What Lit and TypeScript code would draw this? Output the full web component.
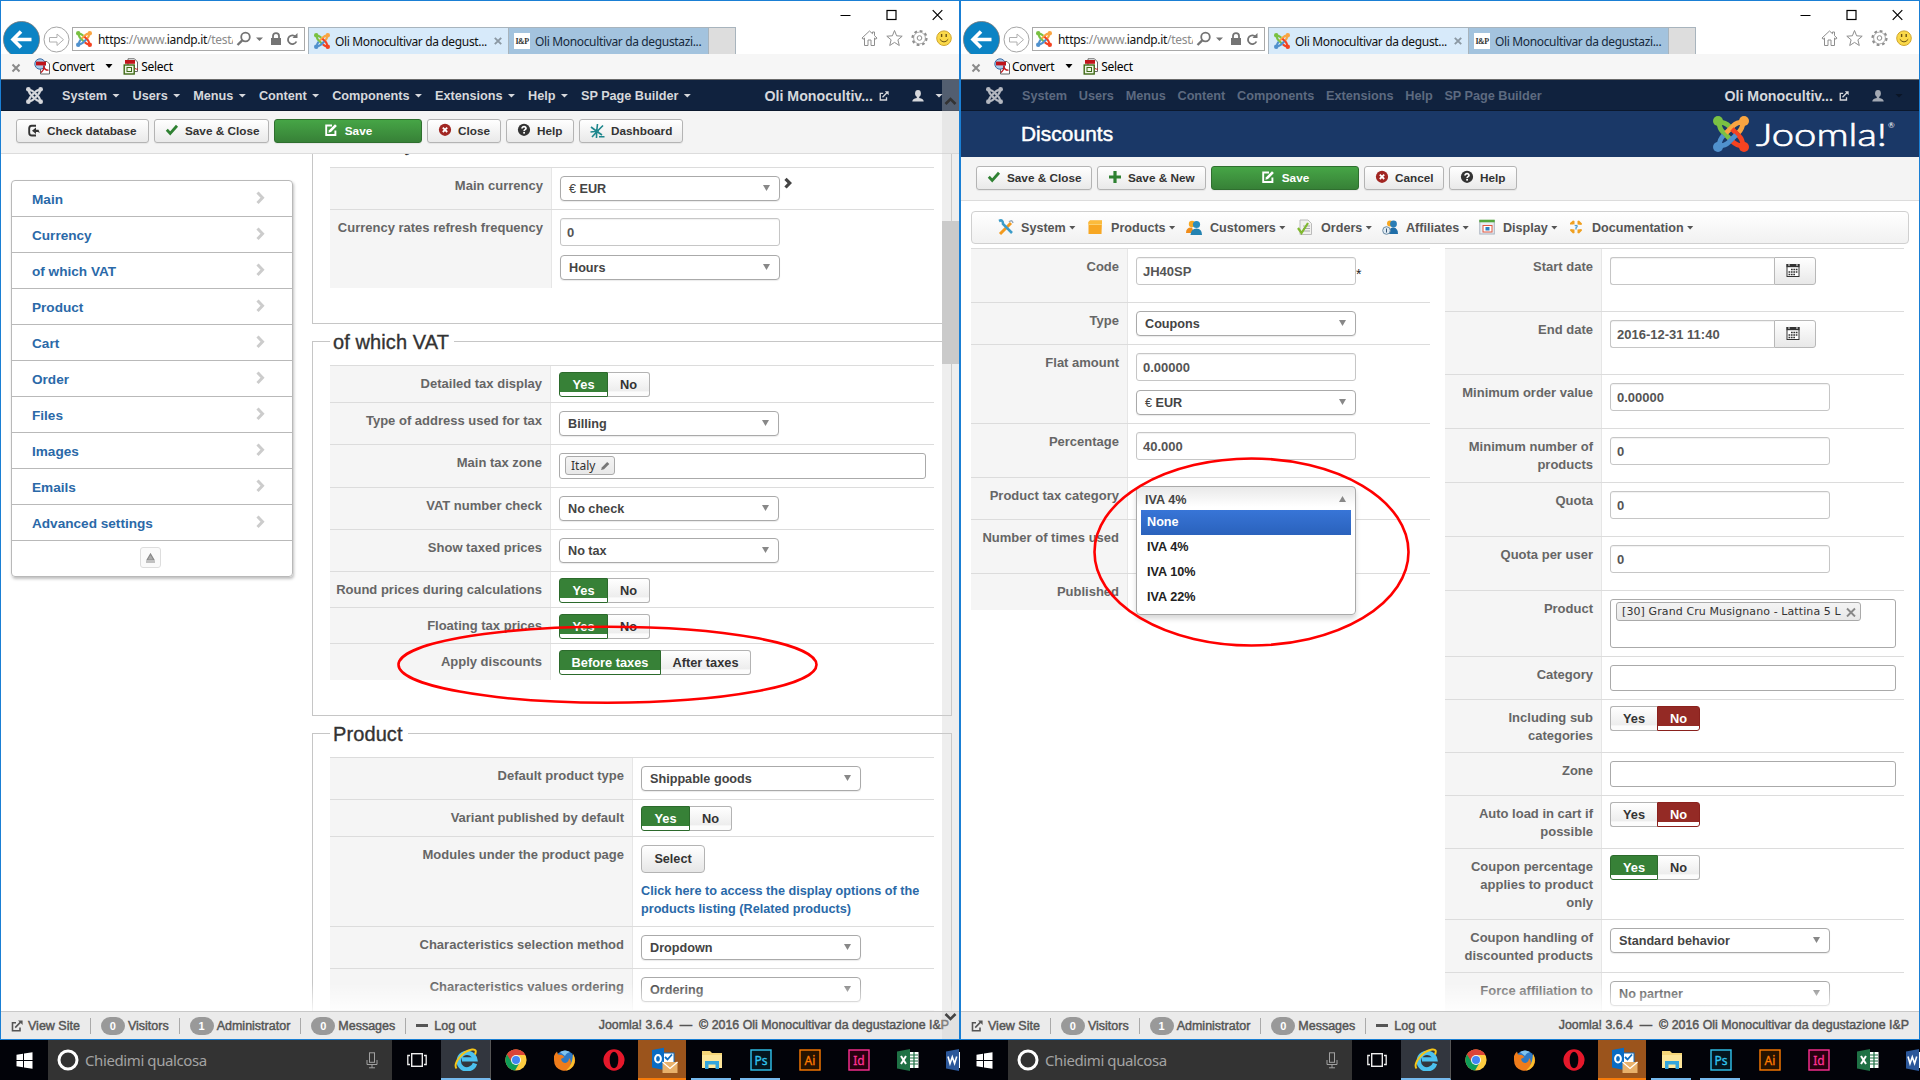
import { LitElement, html, css, svg, nothing, TemplateResult } from "lit";
import { customElement, property } from "lit/decorators.js";

const base = css`
  * { box-sizing: border-box; }
  :host { display: block; font-family: "Liberation Sans", Arial, sans-serif; }
  svg { display: block; flex: none; }
  .seg { font-family: "Noto Sans", "Open Sans", sans-serif; }
`;

const joomlaArm = (color: string, turn: number) => svg`
  <g transform="rotate(${turn} 18 18)" stroke=${color} fill="none" stroke-width="4.8">
    <circle cx="5" cy="5" r="5" fill=${color} stroke="none"/>
    <path d="M6 6C6.300 11.500 7.500 13.500 9.500 15.500L17 23M6 6C11.500 6.300 13.500 7.500 16.500 10.500"/>
  </g>`;

const joomlaMark = (size: number, mono = "") => html`
  <svg width=${size} height=${size} viewBox="0 0 36 36">
    ${joomlaArm(mono || "#7ac143", 0)}${joomlaArm(mono || "#f9a541", 90)}
    ${joomlaArm(mono || "#f44321", 180)}${joomlaArm(mono || "#5091cd", 270)}
  </svg>`;

const external = (size: number) => html`
  <svg width=${size} height=${size} viewBox="0 0 12 12" fill="none" stroke="currentColor" stroke-width="1.6">
    <path d="M5 2.8H1.5V10.8H9V7.5M4.2 7.6L9.8 1.9"/><path d="M7 .4H11.6V5L10.2 3.6 8.6 2z" fill="currentColor" stroke="none"/>
  </svg>`;

const icons: Record<string, TemplateResult> = {
  check: html`<svg width="14" height="14" viewBox="0 0 14 14"><path d="M1.800 6.800L5.200 10.400 12 2.800" fill="none" stroke="#2f8132" stroke-width="2.800"/></svg>`,
  plus: html`<svg width="14" height="14" viewBox="0 0 14 14"><path d="M7 1V13M1 7H13" stroke="#2f8132" stroke-width="3.200"/></svg>`,
  edit: html`<svg width="14" height="14" viewBox="0 0 14 14"><path d="M8 2.500H2.200V12H11.400V7.500" fill="none" stroke="#fff" stroke-width="1.900"/><path d="M4.400 9.800l.6-2.600L11 1.200l1.900 1.900-5.900 6z" fill="#fff"/></svg>`,
  cancel: html`<svg width="14" height="14" viewBox="0 0 14 14"><circle cx="7" cy="6.800" r="6.100" fill="#a12622"/><path d="M4.800 4.600l4.400 4.400M9.200 4.600L4.800 9" stroke="#fff" stroke-width="1.800"/></svg>`,
  help: html`<svg width="14" height="14" viewBox="0 0 14 14"><circle cx="7" cy="6.800" r="6.100" fill="#333"/><path d="M5 5.600C5 2.800 9.200 3 9 5.400 8.900 6.800 7.200 6.500 7.100 8" fill="none" stroke="#fff" stroke-width="1.700"/><rect x="6.200" y="8.900" width="1.800" height="1.700" fill="#fff"/></svg>`,
  redo: html`<svg width="14" height="14" viewBox="0 0 14 14"><path d="M9 2.800H4.600Q2.200 3 2.200 5.500V9.700Q2.200 12.500 5 12.500H9" fill="none" stroke="#333" stroke-width="1.900"/><path d="M5 7.700L9 4.500V6.700H11.500L12.800 10.100 11 8.900H9V10.900z" fill="#333"/></svg>`,
  dash: html`<svg width="15" height="15" viewBox="0 0 15 15"><path d="M7.500 1Q6.500 7.500 6.500 15M1 4L7 8.500 12 12M13 2.500L7 8.500 2 14M.5 9L9 8M9 13.800H14.500" stroke="#1d868c" stroke-width="1.600" fill="none"/></svg>`,
};

@customElement("browser-chrome")
class BrowserChrome extends LitElement {
  static styles = [base, css`
    :host { height: 79px; background: #fff; color: #111; }
    .top { height: 53px; display: flex; position: relative; padding-left: 2px; overflow: hidden; }
    .nav { margin-top: 19px; display: flex; align-items: flex-start; }
    .addr { width: 233px; height: 24px; margin: 26px 0 0 0; border: 1px solid #a9a9a9; display: flex; align-items: center; padding-left: 3px; font-size: 12px; }
    .url { width: 137px; margin-left: 6px; overflow: hidden; white-space: nowrap; letter-spacing: -.3px; }
    .url i { font-style: normal; color: #8a8a8a; }
    .addr .mag { margin-left: 3px; }
    .tab { margin-top: 26px; height: 27px; display: flex; align-items: center; font-size: 12px; border: 1px solid #a8b4bd; border-bottom: 0; white-space: nowrap; letter-spacing: -.35px; }
    .t1 { width: 201px; margin-left: 3px; background: #d7eafa; padding-left: 5px; }
    .t1 span { margin: 0 0 0 5px; width: 155px; }
    .t2 { width: 200px; background: #a3c3de; border-left: 0; padding-left: 5px; color: #15293c; }
    .t2 span { margin: 0 0 0 5px; }
    .t3 { width: 27px; background: #ddd; border-left: 0; }
    .fav { width: 16px; height: 16px; background: #fff; font: bold 8px "Liberation Serif", serif; letter-spacing: -.6px; color: #333; display: grid; place-items: center; }
    .x { margin-left: 4px; }
    .ctl { position: absolute; right: 16px; top: 8px; display: flex; gap: 35px; }
    .tools { position: absolute; right: 7px; top: 28px; display: flex; gap: 8px; }
    .bar { height: 25px; background: #f6f6f6; display: flex; align-items: center; font-size: 12px; padding-left: 10px; color: #000; letter-spacing: -.3px; }
    .bar .cx { margin-top: 2px; }
    .bar span { margin: -1px 0 0 1px; }
    .pdf { margin-left: 13px; }
    .dn { margin-left: 11px; }
    .sel { margin-left: 10px; }
    .line { height: 1px; background: #6b6b6b; }
  `];
  render() {
    return html`
      <div class="top seg">
        <svg class="nav" width="69" height="38" viewBox="0 0 69 38">
          <circle cx="18.5" cy="19.5" r="18" fill="#0b83c4" stroke="#777" stroke-width=".8"/>
          <path d="M28.500 19.500H10M18 11.500L10 19.500L18 27.500" fill="none" stroke="#fff" stroke-width="3.600"/>
          <circle cx="53.500" cy="19.500" r="12.500" fill="#fff" stroke="#a5a5a5"/>
          <path d="M46.500 17.500H54V14L60.500 19.700 54 25.500V22H46.500z" fill="#fff" stroke="#b0b0b0"/>
        </svg>
        <div class="addr">
          ${joomlaMark(16)}
          <span class="url">https<i>://www.</i>iandp.it<i>/test/</i></span>
          <svg class="mag" width="68" height="18" viewBox="0 0 68 18" fill="none" stroke="#747474" stroke-width="1.800">
            <circle cx="9.500" cy="7" r="4.300"/><path d="M6.500 10.200L1.500 15" stroke-width="2.400"/>
            <path d="M20 7.500H27L23.500 11z" fill="#747474" stroke="none"/>
            <rect x="35" y="8" width="10" height="7" fill="#747474" stroke="none"/><path d="M37 8V6Q37 3.200 40 3.200 43 3.200 43 6V8"/>
            <path d="M60 7.200A4.400 4.400 0 1 0 60.400 11.500"/><path d="M61.500 3V8H56.500z" fill="#747474" stroke="none"/>
          </svg>
        </div>
        <div class="tab t1">${joomlaMark(16)}<span>Oli Monocultivar da degust...</span>
          <svg class="x" width="8" height="8" viewBox="0 0 8 8"><path d="M.8.8L7.200 7.200M7.200.8L.8 7.200" stroke="#8b98a3" stroke-width="1.900"/></svg></div>
        <div class="tab t2"><b class="fav">I&amp;P</b><span>Oli Monocultivar da degustazi...</span></div>
        <div class="tab t3"></div>
        <div class="ctl">
          <svg width="11" height="12" viewBox="0 0 11 12"><path d="M.5 6.500H10.500" stroke="#000"/></svg>
          <svg width="11" height="12" viewBox="0 0 11 12"><rect x="1" y="1.500" width="9" height="9" fill="none" stroke="#000" stroke-width="1.200"/></svg>
          <svg width="11" height="12" viewBox="0 0 11 12"><path d="M.7 1.200L10.300 10.800M10.300 1.200L.7 10.800" stroke="#000" stroke-width="1.200"/></svg>
        </div>
        <div class="tools">
          <svg width="17" height="18" viewBox="0 0 17 18"><path d="M1 9L8.500 2 11.500 4.700V3H13.500V6.700L16 9 15 10.300 13.500 9V16.500H10V11H7V16.500H3.500V9L2 10.300z" fill="#fff" stroke="#8e8e8e"/></svg>
          <svg width="17" height="18" viewBox="0 0 17 18"><path d="M8.500 1.500L10.600 6.800 16.200 7.200 11.900 10.800 13.300 16.500 8.500 13.400 3.700 16.500 5.100 10.800.8 7.200 6.400 6.800z" fill="#fff" stroke="#8e8e8e"/></svg>
          <svg width="17" height="18" viewBox="0 0 17 18"><circle cx="8.500" cy="9" r="6.800" fill="none" stroke="#8e8e8e" stroke-width="2.600" stroke-dasharray="2.700 2.640"/><circle cx="8.500" cy="9" r="5.900" fill="#fff" stroke="#9a9a9a" stroke-width=".8"/><circle cx="8.500" cy="9" r="2.300" fill="none" stroke="#8e8e8e"/></svg>
          <svg width="16" height="18" viewBox="0 0 16 18"><circle cx="8" cy="9.200" r="7.300" fill="#fbd949" stroke="#d0a52c"/><path d="M5.600 5V8M10.200 5V8" stroke="#6b5212" stroke-width="1.400"/><path d="M3.800 10.300Q8 15.500 12.200 10.300" fill="none" stroke="#6b5212"/></svg>
        </div>
      </div>
      <div class="bar seg">
        <svg class="cx" width="10" height="10" viewBox="0 0 10 10"><path d="M1.500 1.500L8.500 8.500M8.500 1.500L1.500 8.500" stroke="#8a8a8a" stroke-width="2"/></svg>
        <svg class="pdf" width="17" height="17" viewBox="0 0 17 17"><path d="M6.500 3.500H13L15.500 6V16H6.500z" fill="#fff" stroke="#666"/><circle cx="6" cy="6" r="5.200" fill="#a9cdec" stroke="#3d6da6"/><rect x="2" y="3.600" width="10" height="3.800" fill="#c0141b"/><path d="M7 14.500Q11 11 9.500 7.500Q10.500 12.500 14.500 12.200" fill="none" stroke="#c0141b" stroke-width="1.300"/></svg>
        <span>Convert</span>
        <svg class="dn" width="8" height="5" viewBox="0 0 8 5"><path d="M.5 0H7.500L4 4.300z"/></svg>
        <svg class="sel" width="17" height="17" viewBox="0 0 17 17"><path d="M5 .8H11.500L14.500 4V13.500H5z" fill="#fff" stroke="#666"/><rect x="2" y="2" width="10" height="3.800" fill="#c0141b"/><path d="M11 7Q11 12 15 11" fill="none" stroke="#c0141b"/><rect x="1.200" y="7" width="10" height="9" fill="#eef5e8" stroke="#3f6a14" stroke-width="1.400"/><rect x="4" y="9.500" width="4.500" height="4" fill="none" stroke="#3f6a14"/></svg>
        <span>Select</span>
      </div>
      <div class="line"></div>`;
  }
}

@customElement("admin-nav")
class AdminNav extends LitElement {
  @property({ type: Boolean }) dim = false;
  static styles = [base, css`
    :host { height: 31px; background: #10223e; border-bottom: 1px solid #0b182d; color: #d6d8dc; font-size: 12.700px; font-weight: bold; }
    .row { display: flex; height: 30px; align-items: center; padding: 1px 0 0 25px; }
    nav { display: flex; margin-left: 19px; gap: 12.600px; flex: 1; letter-spacing: -.03px; }
    nav span { display: flex; align-items: center; gap: 5px; white-space: nowrap; }
    nav.dim { color: #5d6a80; gap: 11.800px; }
    .site { display: flex; align-items: center; gap: 6px; font-size: 14.200px; }
    .user { display: flex; align-items: center; gap: 11px; margin: 0 16px 0 23px; }
    .user.dim { color: #a3a9b3; }
    .user.dim .caret { color: #0a1526; }
    .caret { width: 8px; height: 4px; background: currentColor; clip-path: polygon(0 0, 100% 0, 50% 100%); }
  `];
  render() {
    const items = ["System", "Users", "Menus", "Content", "Components", "Extensions", "Help", "SP Page Builder"];
    return html`<div class="row">
      ${joomlaMark(17, this.dim ? "#b4b8c0" : "#d6d8dc")}
      <nav class=${this.dim ? "dim" : ""}>${items.map((i) => html`<span>${i}${this.dim ? nothing : html`<i class="caret"></i>`}</span>`)}</nav>
      <div class="site">Oli Monocultiv... ${external(10)}</div>
      <div class="user ${this.dim ? "dim" : ""}">
        <svg width="12" height="12" viewBox="0 0 12 12"><ellipse cx="6" cy="3.400" rx="2.900" ry="3.400" fill="currentColor"/><path d="M4.800 6H7.200V8Q11.700 8.800 11.700 11.500H.3Q.3 8.800 4.800 8z" fill="currentColor"/></svg>
        <i class="caret"></i>
      </div></div>`;
  }
}

interface Btn { icon: string; text: string; w: number; green?: boolean }

@customElement("tool-buttons")
class ToolButtons extends LitElement {
  @property({ attribute: false }) items: Btn[] = [];
  static styles = [base, css`
    :host { height: 43px; background: #f4f4f4; border-bottom: 1px solid #dcdcdc; padding: 8px 0 0 15px; }
    :host(.tall) { height: 44px; padding-top: 9px; }
    .row { display: flex; gap: 5px; }
    .b { height: 24px; border: 1px solid #b4b4b4; border-radius: 3px; background: linear-gradient(#fff, #e9e9e9); display: flex; align-items: center; gap: 6px; padding: 0 0 2px 10px; font-size: 11.750px; font-weight: bold; color: #333; white-space: nowrap; box-shadow: 0 1px 1px rgba(0, 0, 0, .06); }
    .b.green { background: linear-gradient(#46a546, #378137); border-color: #2f6f2f; color: #fff; justify-content: center; padding-left: 0; gap: 7px; }
  `];
  render() {
    return html`<div class="row">${this.items.map((b) => html`<div class="b ${b.green ? "green" : ""}" style="width:${b.w}px">${icons[b.icon]}${b.text}</div>`)}</div>`;
  }
}

type Field =
  | { k: "select"; v: string } | { k: "input"; v: string } | { k: "both"; a: string; b: string }
  | { k: "toggle"; a: string; b: string; on: 0 | 1; wa: number; wb: number }
  | { k: "tag"; v: string; h: number; w: number; mark: "pen" | "x" | "" }
  | { k: "date"; v: string } | { k: "modules" } | { k: "dropdown" } | { k: "none" };
interface Row { label: string; h: number; f: Field; after?: string }

const yn = (on: 0 | 1, wa = 49, wb = 42): Field => ({ k: "toggle", a: "Yes", b: "No", on, wa, wb });

@customElement("field-table")
class FieldTable extends LitElement {
  @property({ attribute: false }) rows: Row[] = [];
  @property({ type: Number }) label = 221;
  @property({ type: Number }) pad = 8;
  static styles = [base, css`
    :host { font-size: 12.650px; font-weight: bold; color: #444; }
    .r { display: grid; border-top: 1px solid #dcdcdc; }
    .r:last-child { background: linear-gradient(to right, #e4e4e4, #e4e4e4) no-repeat bottom left / var(--lw) 1px; }
    .l { background: #f5f5f5; border-right: 1px solid #e6e6e6; padding: 9px 8px 0 0; text-align: right; line-height: 18px; color: #666; font-size: 13px; }
    .v { padding-top: 8px; position: relative; }
    .v.t { padding-top: 6px; }
    .line { display: flex; }
    .s, .i, .box { border: 1px solid #aaa; border-radius: 4px; background: #fff; display: flex; align-items: center; }
    .s { width: 220px; height: 25px; padding: 0 9px 0 8px; justify-content: space-between; box-shadow: 0 1px 1px rgba(0, 0, 0, .08); }
    .s::after { content: ""; width: 7px; height: 6px; background: #888; clip-path: polygon(0 0, 100% 0, 50% 100%); margin-bottom: 1px; }
    .s.up::after { clip-path: polygon(50% 0, 100% 100%, 0 100%); }
    .i { width: 220px; height: 28px; border-color: #c6c6c6; border-radius: 3px; padding-left: 6px; font-size: 13px; color: #555; box-shadow: inset 0 1px 1px rgba(0, 0, 0, .06); }
    .i + .s { margin-top: 9px; }
    .s em { font-style: normal; font-weight: normal; }
    .star { font-size: 14px; font-weight: normal; margin-top: 9px; color: #222; }
    .chev { margin: 1px 0 0 4px; }
    .tg { display: flex; height: 25px; font-size: 12.800px; }
    .tg span { border: 1px solid #b3b3b3; border-radius: 3px; background: linear-gradient(#fff, #ededed 78%, #fcfcfc 82%); display: grid; place-items: center; color: #333; }
    .tg span:first-child { border-radius: 3px 0 0 3px; border-right: 0; }
    .tg span:last-child { border-radius: 0 3px 3px 0; }
    .tg .yes, .tg .no { color: #fff; background: linear-gradient(#378137 0 19px, #fff 19px); border-color: #2c6a2c; }
    .tg span.yes { border-right: 1px solid #2c6a2c; }
    .tg .yes + span { border-left: 0; }
    .tg .no { background: linear-gradient(#942a25 0 19px, #fff 19px); border-color: #8a211d; }
    .box { align-items: flex-start; border-radius: 3px; }
    .chip { display: flex; align-items: center; border: 1px solid #aaa; border-radius: 3px; background: linear-gradient(#f4f4f4, #e8e8e8); height: 19px; margin: 2px 0 0 5px; padding: 0 4px 0 5px; gap: 5px; font-family: "DejaVu Sans", Verdana, sans-serif; font-weight: normal; font-size: 11px; letter-spacing: .1px; color: #333; white-space: nowrap; }
    .chip.pen { font-family: "Noto Sans", "DejaVu Sans", sans-serif; font-size: 12px; letter-spacing: 0; }
    .date .i { width: 164px; border-radius: 3px 0 0 3px; border-right: 0; }
    .cal { width: 42px; height: 28px; border: 1px solid #b8b8b8; border-radius: 0 3px 3px 0; background: linear-gradient(#fff, #e8e8e8); display: grid; place-items: center; padding: 0 4px 3px 0; }
    .btn { width: 64px; height: 28px; border: 1px solid #b3b3b3; border-radius: 4px; background: linear-gradient(#fff, #e6e6e6); display: grid; place-items: center; color: #333; }
    .link { margin-top: 9px; line-height: 18px; color: #2a69a8; font-size: 12.650px; white-space: nowrap; }
    .drop { position: absolute; left: 8px; top: 8px; width: 220px; height: 129px; border: 1px solid #aaa; border-radius: 4px; background: linear-gradient(#e9e9e9, #fff 20px); box-shadow: 0 4px 5px rgba(0, 0, 0, .15); z-index: 3; }
    .drop .s { border: 0; width: 218px; height: 23px; padding-top: 2px; background: none; box-shadow: none; }
    .drop .o { height: 25px; line-height: 25px; margin: 0 4px; padding-left: 6px; color: #222; }
    .drop .o.on { color: #fff; background: linear-gradient(#3875d7, #2a62bc); }
  `];
  text(v: string) {
    return v.startsWith("€") ? html`<span><em>€</em>${v.slice(1)}</span>` : html`<span>${v}</span>`;
  }
  field(f: Field, after?: string) {
    switch (f.k) {
      case "select": return html`<div class="line"><div class="s">${this.text(f.v)}</div>${after === "chev" ? html`<svg class="chev" width="8" height="13" viewBox="0 0 8 13"><path d="M1.500 1.800L5.800 6 1.500 10.500" fill="none" stroke="#444" stroke-width="3.200"/></svg>` : nothing}</div>`;
      case "input": return html`<div class="line"><div class="i">${f.v}</div>${after === "*" ? html`<span class="star">*</span>` : nothing}</div>`;
      case "both": return html`<div class="i">${f.a}</div><div class="s">${this.text(f.b)}</div>`;
      case "toggle": return html`<div class="tg"><span class=${f.on === 0 ? "yes" : ""} style="width:${f.wa}px">${f.a}</span><span class=${f.on === 1 ? "no" : ""} style="width:${f.wb}px">${f.b}</span></div>`;
      case "tag": return html`<div class="box" style="width:${f.w}px;height:${f.h}px">${f.v ? html`<span class="chip ${f.mark}">${f.v}${f.mark === "pen"
        ? html`<svg width="10" height="10" viewBox="0 0 10 10"><path d="M1 9L2 6.200 7.200 1 9.300 3 4 8.200z" fill="#777"/></svg>`
        : html`<svg width="10" height="10" viewBox="0 0 10 10"><path d="M1 1.500L9 9.500M9 1.500L1 9.500" stroke="#888" stroke-width="1.900"/></svg>`}</span>` : nothing}</div>`;
      case "date": return html`<div class="line date"><div class="i">${f.v}</div><div class="cal"><svg width="14" height="14" viewBox="0 0 14 14"><rect x="1" y="1.500" width="12" height="12" fill="#fff" stroke="#333"/><path d="M.5 1H13.500V4.200H.5z" fill="#333"/><path d="M3 0V3M11 0V3" stroke="#eee"/><path d="M5 6.500H12M2.500 9H12M2.500 11.500H9" stroke="#333" stroke-width="1.600" stroke-dasharray="1.700 .7"/></svg></div></div>`;
      case "modules": return html`<div class="btn">Select</div><div class="link">Click here to access the display options of the<br>products listing (Related products)</div>`;
      case "dropdown": return html`<div class="drop"><div class="s up">IVA 4%</div><div class="o on">None</div><div class="o">IVA 4%</div><div class="o">IVA 10%</div><div class="o">IVA 22%</div></div>`;
      default: return nothing;
    }
  }
  render() {
    return this.rows.map((r) => html`
      <div class="r" style="height:${r.h}px;grid-template-columns:${this.label}px 1fr;--lw:${this.label}px">
        <div class="l">${r.label.split("|").map((s, n) => html`${n ? html`<br>` : nothing}${s}`)}</div>
        <div class="v ${r.f.k === "toggle" ? "t" : ""}" style="padding-left:${this.pad}px">${this.field(r.f, r.after)}</div>
      </div>`);
  }
}

@customElement("status-bar")
class StatusBar extends LitElement {
  static styles = [base, css`
    :host { height: 28px; background: #ebebeb; border-top: 1px solid #c8c8c8; color: #555; font-size: 12.500px; -webkit-text-stroke: .45px currentColor; position: relative; }
    .fade { position: absolute; left: 0; right: 0; top: -29px; height: 28px; background: linear-gradient(rgba(255, 255, 255, 0), rgba(255, 255, 255, .85)); }
    .row { height: 27px; display: flex; align-items: center; padding: 0 10px 0 10px; white-space: nowrap; }
    .g { display: flex; align-items: center; height: 16px; padding-right: 10px; margin-right: 10px; border-right: 1px solid #aaa; }
    .g.last { border: 0; }
    .g svg { margin-right: 5px; }
    .n { width: 24px; height: 18px; border-radius: 9px; background: #999; color: #fff; font-weight: bold; font-size: 11px; display: grid; place-items: center; margin-right: 3px; -webkit-text-stroke: 0; }
    .dash { width: 12px; height: 3px; background: #555; margin-right: 6px; }
    .c { margin-left: auto; margin-top: -2px; white-space: pre; font-size: 12.380px; }
  `];
  render() {
    const groups: [string, string][] = [["0", "Visitors"], ["1", "Administrator"], ["0", "Messages"]];
    return html`<div class="fade"></div><div class="row">
      <div class="g">${external(12)}View Site</div>
      ${groups.map(([n, t]) => html`<div class="g"><span class="n">${n}</span>${t}</div>`)}
      <div class="g last"><i class="dash"></i>Log out</div>
      <div class="c">Joomla! 3.6.4  —  © 2016 Oli Monocultivar da degustazione I&amp;P</div>
    </div>`;
  }
}

const adobe = (t: string, c: string, bg: string) => html`<svg width="22" height="22" viewBox="0 0 22 22"><rect x="1" y="1" width="20" height="20" fill=${bg} stroke=${c} stroke-width="1.400"/><text x="11" y="15.500" text-anchor="middle" font-family="Noto Sans, sans-serif" font-size="12" fill=${c} stroke=${c} stroke-width=".3">${t}</text></svg>`;

@customElement("task-bar")
class TaskBar extends LitElement {
  static styles = [base, css`
    :host { height: 40px; background: #020309; overflow: hidden; }
    .row { display: flex; height: 40px; width: 1000px; }
    .c { width: 49px; display: grid; place-items: center; flex: none; }
    .start { width: 48px; }
    .search { width: 344px; background: #333; display: flex; align-items: center; padding: 0 14px 0 9px; color: #a3a3a3; font-size: 15px; letter-spacing: -.4px; }
    .search span { flex: 1; margin-left: 6px; }
    .view { width: 49px; }
    .ie { width: 50px; background: #32363e; border-bottom: 2px solid #76b9ed; border-right: 1px solid #555; }
    .mail { width: 48px; margin: 0 1px 0 0; padding: 2px 0 0 4px; background: #9b541c; border-bottom: 2px solid #f77b0a; }
    .open { background: linear-gradient(#76b9ed, #76b9ed) no-repeat 4px 38px / 40px 2px; }
  `];
  render() {
    return html`<div class="row seg">
      <div class="c start"><svg width="17" height="17" viewBox="0 0 17 17"><path d="M.5 2.700L7 1.800V8H.5zM8 1.600L16.500.3V8H8zM.5 9H7V15.200L.5 14.300zM8 9H16.500V16.700L8 15.400z" fill="#fff"/></svg></div>
      <div class="search">
        <svg width="22" height="22" viewBox="0 0 22 22"><circle cx="11" cy="11" r="9" fill="none" stroke="#fff" stroke-width="3"/></svg>
        <span>Chiedimi qualcosa</span>
        <svg width="12" height="17" viewBox="0 0 12 17" fill="none" stroke="#a0a0a0"><rect x="3.500" y=".8" width="5" height="9.500"/><path d="M1 8V12.500H11V8M6 12.500V15.800M3 15.800H9"/></svg>
      </div>
      <div class="c view"><svg width="20" height="14" viewBox="0 0 20 14" fill="none" stroke="#eee"><rect x="4.700" y=".7" width="10.600" height="12.600" stroke-width="1.400"/><path d="M3 2.500H.8V11.500H3M17 2.500H19.200V11.500H17" stroke-width="1.300"/></svg></div>
      <div class="c ie"><svg width="24" height="24" viewBox="0 0 24 24"><path d="M21 16.500A8.300 8.300 0 1 1 21.200 12.400H8" fill="none" stroke="#4cc1ee" stroke-width="4.400"/><path d="M2.500 21.500C-1 17 8 4 18 2.500C22 2 22.500 4 21 7.500" fill="none" stroke="#f5c518" stroke-width="2"/></svg></div>
      <div class="c"><svg width="22" height="22" viewBox="0 0 22 22"><circle cx="11" cy="11" r="10.600" fill="#ffcd40"/><path d="M11 11L2 5.500A10.600 10.600 0 0 1 20.300 6H11z" fill="#db4437"/><path d="M11 11L1.900 5.600A10.600 10.600 0 0 0 10 21.600L15 13z" fill="#0f9d58"/><path d="M2 5.500A10.600 10.600 0 0 1 20.300 6H11A5 5 0 0 0 6.300 12.500z" fill="#db4437"/><circle cx="11" cy="11" r="5" fill="#f4f4f4"/><circle cx="11" cy="11" r="4" fill="#4285f4"/></svg></div>
      <div class="c"><svg width="23" height="23" viewBox="0 0 23 23"><circle cx="12" cy="11" r="9.500" fill="#2c78c4"/><path d="M7 3Q12 0 17 3Q13 4 12 7z" fill="#7fc4ee"/><path d="M1 7Q2 4 4 2.500L5 5.500 9 6 11.500 8 8 10Q9 14 12.500 14Q16 13 16 9Q19 12 17 15.500Q20 13 20 5Q24 11 20.500 17Q16 23 9 21.500Q1 19 1 11z" fill="#ef7c1b"/><path d="M20 5Q23.500 11 20 17Q17 21 13 21.500Q20 16 20 5z" fill="#f9c22e"/></svg></div>
      <div class="c"><svg width="22" height="22" viewBox="0 0 22 22"><path fill-rule="evenodd" d="M11 .3A10.600 10.700 0 1 0 11 21.700 10.600 10.700 0 1 0 11 .3zM11 2.800Q15.300 3.500 15.300 11T11 19.200Q6.700 18.500 6.700 11T11 2.800z" fill="#e5182b"/></svg></div>
      <div class="c mail"><svg width="27" height="26" viewBox="0 0 27 26"><rect x="11" y="6" width="12" height="12" fill="#fff" stroke="#0a6cc4"/><path d="M14 10L16.500 12.500 21 7.500" fill="none" stroke="#0a6cc4" stroke-width="1.800"/><path d="M1 3L13 .8V23L1 20.500z" fill="#0a6cc4"/><ellipse cx="7" cy="11.800" rx="2.900" ry="3.700" fill="none" stroke="#fff" stroke-width="2"/><rect x="11.500" y="15" width="15" height="11" fill="#e8b06a"/><path d="M11.500 15L19 21.500 26.500 15" fill="none" stroke="#fff" stroke-width="1.300"/></svg></div>
      <div class="c open"><svg width="22" height="20" viewBox="0 0 22 20"><path d="M1 1H9L11 3H21V18H1z" fill="#f5d679"/><path d="M1 5H21V18H1z" fill="#fde69a"/><path d="M4 19V11H18V19H14.500V14.500H7.500V19z" fill="#34a5dc"/></svg></div>
      <div class="c open">${adobe("Ps", "#31c5f0", "#04161f")}</div>
      <div class="c">${adobe("Ai", "#ff7c00", "#261300")}</div>
      <div class="c">${adobe("Id", "#ff3093", "#27000f")}</div>
      <div class="c"><svg width="22" height="22" viewBox="0 0 22 22"><rect x="11" y="3" width="10.500" height="16" fill="#fff"/><path d="M11 6H21M11 9H21M11 12H21M11 15H21M17 3V19" stroke="#1e7145" stroke-width="1.200"/><path d="M0 2.500L13 0V22L0 19.500z" fill="#1e7145"/><path d="M4 7L9 15M9 7L4 15" stroke="#fff" stroke-width="2"/></svg></div>
      <div class="c"><svg width="22" height="22" viewBox="0 0 22 22"><rect x="11" y="3" width="10.500" height="16" fill="#fff"/><path d="M0 2.500L13 0V22L0 19.500z" fill="#2b579a"/><path d="M2 7.500L4 14.500 6.300 8 8.600 14.500 10.700 7.500" stroke="#fff" stroke-width="1.600" fill="none"/></svg></div>
    </div>`;
  }
}

@customElement("app-root")
class AppRoot extends LitElement {
  static styles = [base, css`
    :host { width: 1920px; height: 1080px; overflow: hidden; background: #fff; position: relative; }
    .desk { display: grid; grid-template-columns: 960px 960px; }
    .side { display: flex; flex-direction: column; width: 960px; height: 1080px; }
    .win { height: 1040px; border: 1px solid #1a7fd4; display: flex; flex-direction: column; position: relative; background: #fff; }
    .body { flex: 1; min-height: 0; overflow: hidden; }
    .left { display: grid; grid-template-columns: 311px 640px; }
    .menu { margin: 26px 0 0 10px; width: 282px; height: 397px; border: 1px solid #b9b9b9; border-radius: 4px; box-shadow: 1px 2px 3px rgba(0, 0, 0, .25); }
    .mi { height: 36px; border-bottom: 1px solid #b9b9b9; display: flex; justify-content: space-between; padding: 9px 27px 0 20px; line-height: 19px; font-size: 13.600px; font-weight: bold; color: #2a69a8; }
    .mi svg { margin-top: 1px; }
    .fold { width: 21px; height: 21px; margin: 6px auto 0; border: 1px solid #ddd; border-radius: 3px; display: grid; place-items: center; background: #fafafa; position: relative; left: -2px; }
    fieldset { margin: -7px 0 0; padding: 0 17px 0 17px; border: 1px solid #c6c6c6; width: 640px; min-width: 0; }
    .f1 { height: 205px; margin-top: -35px; }
    .f2 { height: 399px; }
    .f3 { height: 330px; }
    legend { height: 48px; line-height: 51px; padding: 0 5px 0 3px; font-size: 20px; letter-spacing: .1px; color: #333; -webkit-text-stroke: .35px #333; }
    .sb { position: absolute; right: 0; top: 79px; bottom: 0; width: 17px; background: rgba(205, 205, 205, .35); }
    .thumb { margin-top: 141px; height: 143px; background: #cacaca; }
    .sb svg { position: absolute; left: 2px; }
    .up { top: 15px; }
    .down { bottom: 16px; }
    .title { height: 46px; background: #1a3867; color: #fff; display: flex; align-items: center; justify-content: space-between; padding: 0 22px 0 60px; font-size: 20.800px; letter-spacing: .1px; -webkit-text-stroke: .5px #fff; }
    .brand { display: flex; align-items: center; gap: 6px; letter-spacing: 0; -webkit-text-stroke: 0; }
    .hk { margin: 10px 0 0 10px; width: 938px; height: 33px; border: 1px solid #d0d0d0; border-radius: 4px; background: linear-gradient(#fff, #f1f1f1); display: flex; align-items: center; padding-left: 25px; font-size: 12.600px; font-weight: bold; color: #555; }
    .hk span { display: flex; align-items: center; white-space: nowrap; }
    .hk span svg { margin-right: 7px; }
    .hk i { width: 7px; height: 4px; background: #555; clip-path: polygon(0 0, 100% 0, 50% 100%); margin-left: 3px; }
    .cols { display: grid; grid-template-columns: 459px 459px; gap: 15px; margin: 4px 0 0 10px; }
    .ring { position: absolute; left: 0; top: 0; z-index: 5; pointer-events: none; }
  `];

  render() {
    const menu = ["Main", "Currency", "of which VAT", "Product", "Cart", "Order", "Files", "Images", "Emails", "Advanced settings"];
    const currency: Row[] = [
      { label: "Main currency", h: 42, f: { k: "select", v: "€ EUR" }, after: "chev" },
      { label: "Currency rates refresh frequency", h: 79, f: { k: "both", a: "0", b: "Hours" } },
    ];
    const vat: Row[] = [
      { label: "Detailed tax display", h: 37, f: yn(0) },
      { label: "Type of address used for tax", h: 42, f: { k: "select", v: "Billing" } },
      { label: "Main tax zone", h: 43, f: { k: "tag", v: "Italy", w: 367, h: 26, mark: "pen" } },
      { label: "VAT number check", h: 42, f: { k: "select", v: "No check" } },
      { label: "Show taxed prices", h: 42, f: { k: "select", v: "No tax" } },
      { label: "Round prices during calculations", h: 36, f: yn(0) },
      { label: "Floating tax prices", h: 36, f: yn(0) },
      { label: "Apply discounts", h: 37, f: { k: "toggle", a: "Before taxes", b: "After taxes", on: 0, wa: 102, wb: 90 } },
    ];
    const product: Row[] = [
      { label: "Default product type", h: 42, f: { k: "select", v: "Shippable goods" } },
      { label: "Variant published by default", h: 37, f: yn(0) },
      { label: "Modules under the product page", h: 90, f: { k: "modules" } },
      { label: "Characteristics selection method", h: 42, f: { k: "select", v: "Dropdown" } },
      { label: "Characteristics values ordering", h: 42, f: { k: "select", v: "Ordering" } },
      { label: "", h: 30, f: { k: "none" } },
    ];
    const main: Row[] = [
      { label: "Code", h: 54, f: { k: "input", v: "JH40SP" }, after: "*" },
      { label: "Type", h: 42, f: { k: "select", v: "Coupons" } },
      { label: "Flat amount", h: 79, f: { k: "both", a: "0.00000", b: "€ EUR" } },
      { label: "Percentage", h: 54, f: { k: "input", v: "40.000" } },
      { label: "Product tax category", h: 42, f: { k: "dropdown" } },
      { label: "Number of times used", h: 54, f: { k: "none" } },
      { label: "Published", h: 37, f: { k: "none" } },
    ];
    const restr: Row[] = [
      { label: "Start date", h: 63, f: { k: "date", v: "" } },
      { label: "End date", h: 63, f: { k: "date", v: "2016-12-31 11:40" } },
      { label: "Minimum order value", h: 54, f: { k: "input", v: "0.00000" } },
      { label: "Minimum number of|products", h: 54, f: { k: "input", v: "0" } },
      { label: "Quota", h: 54, f: { k: "input", v: "0" } },
      { label: "Quota per user", h: 54, f: { k: "input", v: "0" } },
      { label: "Product", h: 66, f: { k: "tag", v: "[30] Grand Cru Musignano - Lattina 5 L", w: 286, h: 49, mark: "x" } },
      { label: "Category", h: 43, f: { k: "tag", v: "", w: 286, h: 26, mark: "" } },
      { label: "Including sub|categories", h: 53, f: yn(1, 47, 43) },
      { label: "Zone", h: 43, f: { k: "tag", v: "", w: 286, h: 26, mark: "" } },
      { label: "Auto load in cart if|possible", h: 53, f: yn(1, 47, 43) },
      { label: "Coupon percentage|applies to product|only", h: 71, f: yn(0, 48, 42) },
      { label: "Coupon handling of|discounted products", h: 53, f: { k: "select", v: "Standard behavior" } },
      { label: "Force affiliation to", h: 53, f: { k: "select", v: "No partner" } },
    ];
    const leftBtns: Btn[] = [
      { icon: "redo", text: "Check database", w: 133 }, { icon: "check", text: "Save & Close", w: 115 },
      { icon: "edit", text: "Save", w: 148, green: true }, { icon: "cancel", text: "Close", w: 74 },
      { icon: "help", text: "Help", w: 68 }, { icon: "dash", text: "Dashboard", w: 104 },
    ];
    const rightBtns: Btn[] = [
      { icon: "check", text: "Save & Close", w: 116 }, { icon: "plus", text: "Save & New", w: 109 },
      { icon: "edit", text: "Save", w: 148, green: true }, { icon: "cancel", text: "Cancel", w: 80 }, { icon: "help", text: "Help", w: 68 },
    ];
    const hk: [string, number, TemplateResult][] = [
      ["System", 90, svg`<path d="M3 15L14 4" stroke="#f39a1d" stroke-width="3"/><path d="M2 2Q6 0 6 5L15 14" stroke="#3b9cc9" stroke-width="2.600" fill="none"/><path d="M12 3Q15 0 16 4" stroke="#9ab" stroke-width="1.500" fill="none"/>`],
      ["Products", 99, svg`<path d="M1.500 3L3 1.500H15L14.500 15H1.500z" fill="#f7a723"/><path d="M1.500 5.500H15" stroke="#fbd070"/><path d="M1.500 3L3 1.500H15V5H1.500z" fill="#fbbb3c"/>`],
      ["Customers", 111, svg`<circle cx="6" cy="5" r="3.200" fill="#f7a823"/><path d="M0 14Q0 8 6 8.500L8 14z" fill="#f08c1a"/><circle cx="10.500" cy="5.500" r="3.600" fill="#2a8dbd"/><path d="M4.500 16Q5 9.500 10.500 9.500T16 16z" fill="#2382b1"/>`],
      ["Orders", 85, svg`<path d="M3 1H11L14.500 4.500V15.500H3z" fill="#f1f1ee" stroke="#bbb"/><path d="M6 7H13M6 9.500H13M6 12H13" stroke="#aaa"/><path d="M1 9L4.500 14 11 4" fill="none" stroke="#7fb82e" stroke-width="2.200"/>`],
      ["Affiliates", 97, svg`<circle cx="8" cy="4.500" r="3" fill="#f7a823"/><circle cx="11.500" cy="5" r="3.400" fill="#2a7db5"/><path d="M6 15Q7 8 11.500 8.500T16 15z" fill="#1f6ea8"/><circle cx="4.500" cy="11.500" r="3.800" fill="#dfeaf2" stroke="#6b8ba3"/><path d="M4.500 9.500V13.500" stroke="#357"/>`],
      ["Display", 89, svg`<rect x=".8" y="1.500" width="14.500" height="13.500" fill="#e9edf3" stroke="#a9b3c0"/><path d="M.3 2H15.700" stroke="#53a63c" stroke-width="2.600"/><rect x="4" y="6.500" width="9" height="6.500" fill="#fff" stroke="#e0563f"/><rect x="6.500" y="8" width="4" height="3.500" fill="#2b7fc1"/>`],
      ["Documentation", 130, svg`<g fill="#f0a020"><path d="M2 5L5 2V5.500L5.500 5H2zM6.500 5.500L2 5.500 2 4 5 1.500 6.500 2z"/><path d="M9.500 5.500V2L11 1.500 14 4.500 13.500 6zM9.500 10.500V14L11 14.500 14 11.500 13.500 10zM6.500 10.500V14L5 14.500 2 11.500 2.500 10z"/></g><path d="M6.800 7Q8 5.800 9.200 7Q9.200 8 8 8.800V10.500" fill="none" stroke="#4a9bd0" stroke-width="1.300"/>`],
    ] as any;
    return html`
      <div class="desk">
        <div class="side">
          <div class="win">
            <browser-chrome></browser-chrome>
            <admin-nav></admin-nav>
            <tool-buttons .items=${leftBtns}></tool-buttons>
            <div class="body left">
              <div class="menu">
                ${menu.map((m) => html`<div class="mi">${m}<svg width="9" height="14" viewBox="0 0 9 14"><path d="M1.500 1.500L6.500 6.800 1.500 12" fill="none" stroke="#ccc" stroke-width="3"/></svg></div>`)}
                <div class="fold"><svg width="9" height="10" viewBox="0 0 9 10"><path d="M1 7L4.500 1 8 7zM0 9H9" fill="#aaa" stroke="#888" stroke-width="1.200"/></svg></div>
              </div>
              <div>
                <fieldset class="f1"><legend>Currency</legend><field-table .rows=${currency} .label=${222}></field-table></fieldset>
                <fieldset class="f2"><legend>of which VAT</legend><field-table .rows=${vat}></field-table></fieldset>
                <fieldset class="f3"><legend>Product</legend><field-table .rows=${product} .label=${303}></field-table></fieldset>
              </div>
            </div>
            <status-bar></status-bar>
            <div class="sb">
              <svg class="up" width="13" height="12" viewBox="0 0 13 12"><path d="M1.500 9L6.500 4 11.500 9" fill="none" stroke="#333" stroke-width="2.600"/></svg>
              <div class="thumb"></div>
              <svg class="down" width="13" height="12" viewBox="0 0 13 12"><path d="M1.500 3L6.500 8 11.500 3" fill="none" stroke="#444" stroke-width="2.600"/></svg>
            </div>
          </div>
          <task-bar></task-bar>
        </div>
        <div class="side">
          <div class="win">
            <browser-chrome></browser-chrome>
            <admin-nav dim></admin-nav>
            <div class="title"><span>Discounts</span>
              <div class="brand">${joomlaMark(36)}
                <svg width="142" height="40" viewBox="0 0 142 40"><g font-family="Lato, sans-serif" fill="#fff"><text x="1" y="32" font-size="31" font-weight="300" stroke="#fff" stroke-width=".7" textLength="131" lengthAdjust="spacingAndGlyphs">Joomla!</text><text x="133" y="14" font-size="8">®</text></g></svg>
              </div>
            </div>
            <tool-buttons class="tall" .items=${rightBtns}></tool-buttons>
            <div class="body">
              <div class="hk">${hk.map(([t, w, ic]) => html`<span style="width:${w}px"><svg width="17" height="17" viewBox="0 0 17 17">${ic}</svg>${t}<i></i></span>`)}</div>
              <div class="cols">
                <field-table .rows=${main} .label=${157}></field-table>
                <field-table .rows=${restr} .label=${157}></field-table>
              </div>
            </div>
            <status-bar></status-bar>
          </div>
          <task-bar></task-bar>
        </div>
      </div>
      <svg class="ring" width="1920" height="1080" viewBox="0 0 1920 1080" fill="none" stroke="#f00" stroke-width="2.600">
        <ellipse cx="607.500" cy="664.700" rx="209" ry="38"/><ellipse cx="1251.500" cy="552" rx="157" ry="93.500"/>
      </svg>`;
  }
}
